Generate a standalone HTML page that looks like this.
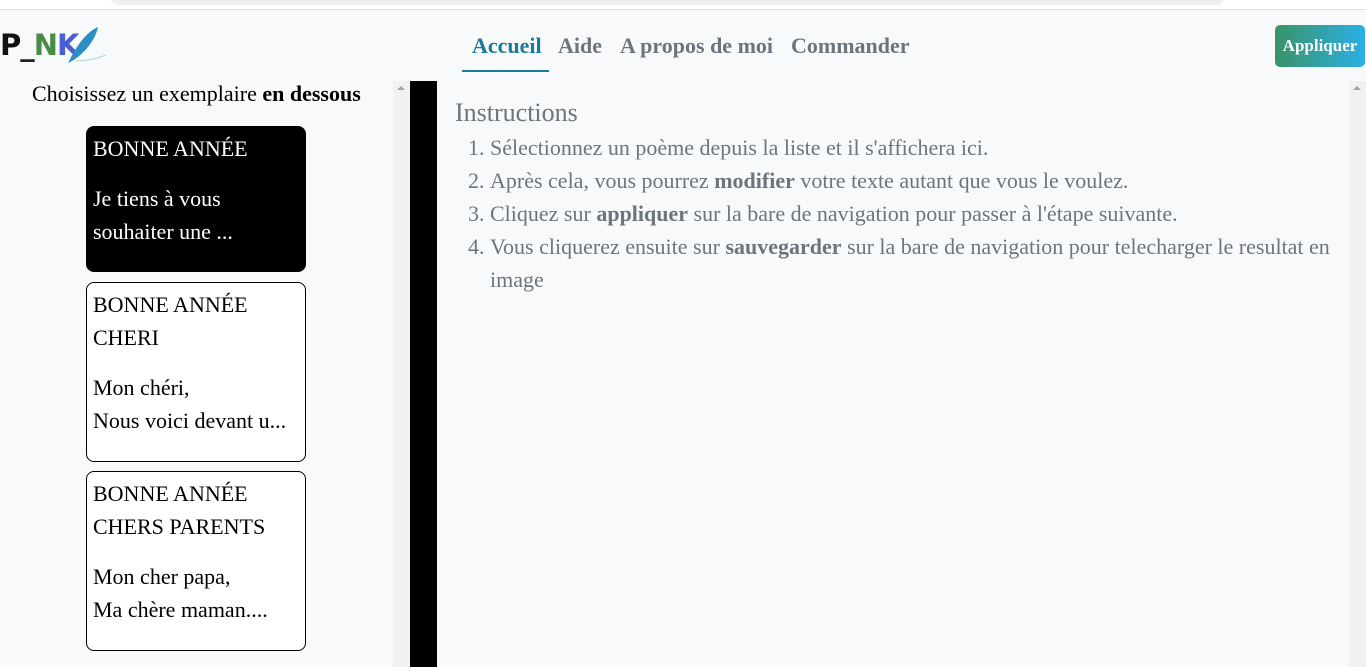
<!DOCTYPE html>
<html><head><meta charset="utf-8"><style>
*{margin:0;padding:0;box-sizing:border-box}
body{width:1366px;height:667px;overflow:hidden;background:#f8f9fa;font-family:"Liberation Serif",serif;position:relative}
.topstrip{position:absolute;left:0;top:0;width:1366px;height:10px;background:#fff;border-bottom:1px solid #dcdcdc}
.topstrip .bar{position:absolute;left:110px;top:-4px;width:1115px;height:9px;background:#eff0f2;border-radius:0 0 10px 10px}
.logo{position:absolute;left:0;top:28px;font-family:"DejaVu Sans",sans-serif;font-size:29px;font-weight:bold;letter-spacing:-1px}
nav{position:absolute;left:462px;top:33px;font-weight:bold;font-size:22px;color:#6c757d}
nav span{position:absolute;white-space:nowrap}
.btn{position:absolute;left:1275px;top:25px;width:90px;height:42px;border-radius:5px;background:linear-gradient(90deg,#3a9367,#2bb0e6);color:#fff;font-weight:bold;font-size:17px;text-align:center;line-height:42px}
.left{position:absolute;left:0;top:81px;width:393px;height:586px}
.sb{position:absolute;top:81px;width:16px;height:586px;background:#f1f1f1}
.sb:before{content:"";position:absolute;left:4px;top:5px;border:4px solid transparent;border-bottom:4px solid #a3a3a3;border-top:0}
.black{position:absolute;left:410px;top:81px;width:27px;height:586px;background:#000}
.card{position:absolute;left:86px;width:220px;border:1px solid #000;border-radius:8px;padding:5px 6px;font-size:22px;line-height:33px;color:#000;background:#fff}
.card p{margin-bottom:17px}
h2{position:absolute;left:455px;top:98px;font-weight:normal;font-size:26px;color:#6c757d}
ol{position:absolute;left:490px;top:131px;width:850px;font-size:22px;line-height:33px;color:#6c757d}
</style></head><body>
<div class="topstrip"><div class="bar"></div></div>
<div class="logo"><span style="color:#111">P</span><span style="color:#222">_</span><span style="color:#4a8c46">N</span><span style="color:#4a5fd6">K</span></div>
<svg style="position:absolute;left:66px;top:25px" width="44" height="40" viewBox="0 0 44 40"><path d="M2 38 C8 26 18 8 32 2 C30 12 22 26 6 36 Z" fill="#2a8fc4"/><path d="M10 36 C20 36 30 34 40 30" stroke="#a8d4ea" fill="none" stroke-width="1"/></svg>
<nav><span style="left:10px;color:#1a7a9c">Accueil</span><span style="left:96px">Aide</span><span style="left:158px">A propos de moi</span><span style="left:329px">Commander</span></nav>
<div style="position:absolute;left:462px;top:70px;width:87px;height:2px;background:#1a7a9c"></div>
<div class="btn">Appliquer</div>
<div class="left">
<div style="position:absolute;left:32px;top:0px;font-size:22px">Choisissez un exemplaire <b>en dessous</b></div>
</div>
<div class="card" style="top:126px;height:146px;background:#000;color:#fff"><p>BONNE ANNÉE</p>Je tiens à vous souhaiter une ...</div>
<div class="card" style="top:282px;height:180px"><p>BONNE ANNÉE CHERI</p>Mon chéri,<br>Nous voici devant u...</div>
<div class="card" style="top:471px;height:180px"><p>BONNE ANNÉE CHERS PARENTS</p>Mon cher papa,<br>Ma chère maman....</div>
<div class="sb" style="left:393px"></div>
<div class="black"></div>
<h2>Instructions</h2>
<ol>
<li>Sélectionnez un poème depuis la liste et il s'affichera ici.</li>
<li>Après cela, vous pourrez <b>modifier</b> votre texte autant que vous le voulez.</li>
<li>Cliquez sur <b>appliquer</b> sur la bare de navigation pour passer à l'étape suivante.</li>
<li>Vous cliquerez ensuite sur <b>sauvegarder</b> sur la bare de navigation pour telecharger le resultat en image</li>
</ol>
<div class="sb" style="left:1349px;width:17px"></div>
</body></html>
